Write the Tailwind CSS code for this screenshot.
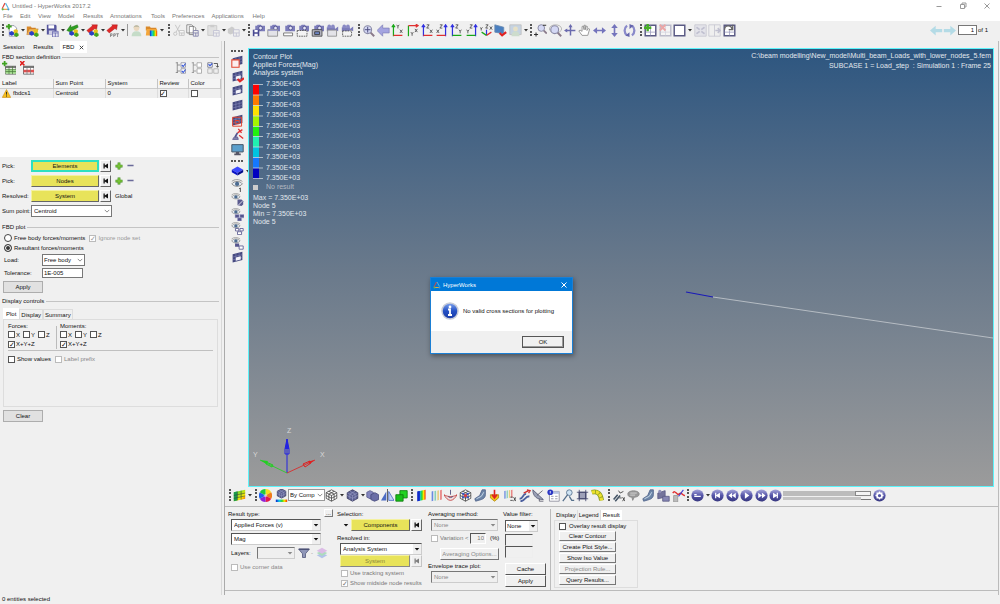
<!DOCTYPE html>
<html lang="en">
<head>
<meta charset="utf-8">
<title>Untitled - HyperWorks 2017.2</title>
<script src="https://cdn.jsdelivr.net/npm/@tailwindcss/browser@4"></script>
</head>
<body class="relative flex min-h-screen flex-col overflow-x-hidden bg-[#f0f0f0] font-['Liberation_Sans',Arial,sans-serif] text-[6px] leading-[8px] text-[#111] [&_[type=checkbox]]:flex [&_[type=checkbox]]:size-[7px] [&_[type=checkbox]]:shrink-0 [&_[type=checkbox]]:appearance-none [&_[type=checkbox]]:items-center [&_[type=checkbox]]:justify-center [&_[type=checkbox]]:border [&_[type=checkbox]]:border-[#555] [&_[type=checkbox]]:bg-white [&_[type=checkbox]:disabled]:border-[#bbb] [&_[type=checkbox]:checked]:before:text-[7px] [&_[type=checkbox]:checked]:before:leading-[7px] [&_[type=checkbox]:checked]:before:content-['✓'] [&_label]:whitespace-nowrap [&_button]:whitespace-nowrap">

<svg class="absolute size-0" aria-hidden="true">
  <defs>
    <linearGradient id="ball" x1="0" y1="0" x2="0" y2="1"><stop offset="0" stop-color="#a9a9dc"/><stop offset=".5" stop-color="#5555a8"/><stop offset="1" stop-color="#37377f"/></linearGradient>
    <linearGradient id="info" x1="0" y1="0" x2="0" y2="1"><stop offset="0" stop-color="#7fa4ee"/><stop offset=".5" stop-color="#2450c4"/><stop offset="1" stop-color="#1a3aa6"/></linearGradient>
    <linearGradient id="rain" x1="0" y1="0" x2="1" y2="0"><stop offset="0" stop-color="#0a1fd0"/><stop offset=".3" stop-color="#12c9e8"/><stop offset=".55" stop-color="#2ed52e"/><stop offset=".75" stop-color="#ffe500"/><stop offset="1" stop-color="#f03000"/></linearGradient>
    <linearGradient id="warm" x1="0" y1="0" x2="1" y2="1"><stop offset="0" stop-color="#1fb83a"/><stop offset=".4" stop-color="#9be020"/><stop offset=".7" stop-color="#ffe500"/><stop offset="1" stop-color="#f03000"/></linearGradient>
  </defs>
  <symbol id="trio" viewBox="0 0 16 16"><path d="M4 10l3-1.500L10 10v3l-3 1.500L4 13z" fill="#2a3fc4"/><path d="M9.500 7.500l2.500-1 2.500 1v3L12 12l-2.500-1z" fill="#e8c21c"/><path d="M10 12l2.500-1.500L15.500 12v2.500L13 16l-3-1.500z" fill="#43a51c"/></symbol>
  <symbol id="logo" viewBox="0 0 16 16"><path d="M7 2L2 12" stroke="#e0463a" stroke-width="2" fill="none"/><path d="M8 2l5 9" stroke="#58b4e0" stroke-width="2" fill="none"/><path d="M3 13h9" stroke="#e9a23a" stroke-width="2"/><circle cx="3" cy="13" r="2" fill="#5db65d"/><circle cx="13" cy="13" r="2" fill="#3b9ad6"/></symbol>
  <symbol id="new" viewBox="0 0 16 16"><path d="M4 2h6l3 3v10H4z" fill="#fff" stroke="#8a8aa0"/><path d="M0 3h7M3.500 0v6.500" stroke="#3fa321" stroke-width="2.400"/><use href="#trio"/></symbol>
  <symbol id="open" viewBox="0 0 16 16"><path d="M1 3h5l1 1.500h5V7H4l-3 6z" fill="#d9892b"/><path d="M4 6h11l-3 7H1z" fill="#f4b65a" stroke="#b9731f" stroke-width=".6"/><use href="#trio"/></symbol>
  <symbol id="save" viewBox="0 0 16 16"><path d="M1 1h11l1 1v11H1z" fill="#56569e"/><path d="M3 1.500h7v4H3z" fill="#fff"/><path d="M3.500 8h7v5h-7z" fill="#cfcfe6"/><path d="M8 9h7v7H8z" fill="#dfe0f0" stroke="#6a6ab0"/><path d="M8 11h7M11.500 11v5" stroke="#6a6ab0"/></symbol>
  <symbol id="imp" viewBox="0 0 16 16"><path d="M14 1L6 4V1L1 8l7 3-1-2.500L15 4z" fill="#2f9e22" stroke="#1c6e15" stroke-width=".5"/><use href="#trio"/></symbol>
  <symbol id="exp" viewBox="0 0 16 16"><path d="M1 8L8 2l-1-1h7l-1 6-2-1.500L4 11z" fill="#e02a2a" stroke="#9b1616" stroke-width=".5"/><use href="#trio"/></symbol>
  <symbol id="ppt" viewBox="0 0 16 16"><path d="M1 8L8 2l-1-1h7l-1 6-2-1.500L4 11z" fill="#e02a2a" stroke="#9b1616" stroke-width=".5"/><path d="M5.500 16v-4h2v2h-2M9.500 16v-4h2v2h-2M12.500 12H16M14.200 12v4" stroke="#666" stroke-width=".8" fill="none"/></symbol>
  <symbol id="user" viewBox="0 0 16 16"><g opacity=".6"><circle cx="8" cy="5" r="3.500" fill="#e7c9a0"/><path d="M4.500 5a3.500 3.500 0 017 0l-1-1.500h-5z" fill="#8b8b68"/><path d="M2 15c0-4 2-6 6-6s6 2 6 6z" fill="#a9cfae"/></g></symbol>
  <symbol id="opencol" viewBox="0 0 16 16"><path d="M1 3h5l1 1.500h7V8H1z" fill="#d9892b"/><path d="M2 6h13l-2 8H1z" fill="#f4a63a"/><path d="M6 8h9v7H6z" fill="url(#rain)"/></symbol>
  <symbol id="cut" viewBox="0 0 16 16"><g opacity=".4" stroke="#777" fill="none"><path d="M4 1l5 9M10 1L5 10"/><circle cx="4" cy="12" r="2"/><path d="M9 8h6v6H9zM9 11h6M12 11v3" fill="#fff"/></g></symbol>
  <symbol id="copy" viewBox="0 0 16 16"><path d="M1 1h6l2 2v8H1zM4 3h6l2 2v8H4z" fill="#fff" stroke="#777"/><path d="M9 8h6v7H9zM9 11h6M12 11v4" fill="#eee" stroke="#7d7da8"/></symbol>
  <symbol id="paste" viewBox="0 0 16 16"><g opacity=".4"><path d="M1 2h11v12H1z" fill="#ccc" stroke="#888"/><path d="M4 1h5v3H4z" fill="#999"/><path d="M8 8h7v7H8zM8 11h7M11.500 11v4" fill="#eee" stroke="#7d7da8"/></g></symbol>
  <symbol id="clone" viewBox="0 0 16 16"><g opacity=".4"><path d="M1 6l5-3 3 2v6l-5 2-3-2z" fill="#999"/><path d="M8 7h7v8H8zM8 11h7M11.500 11v4" fill="#eee" stroke="#7d7da8"/></g></symbol>
  <symbol id="cambody" viewBox="0 0 16 16"><path d="M4 2h2l1-1h4l1 1h4v7H4z" fill="#7c7cba"/><circle cx="10.500" cy="5" r="2.300" fill="#e6e6f6" stroke="#4a4a88"/></symbol>
  <symbol id="cam1" viewBox="0 0 16 16"><use href="#cambody"/><path d="M1 7h8v8H1z" fill="#4a4a92"/><path d="M3 7.500h4v2.500H3zM3 12h4v3H3z" fill="#fff"/></symbol>
  <symbol id="cam2" viewBox="0 0 16 16"><use href="#cambody"/><path d="M1 7h12v8H1z" fill="#e3e3e8" stroke="#888"/><path d="M1 7h12v1.500H1z" fill="#99c"/></symbol>
  <symbol id="cam3" viewBox="0 0 16 16"><use href="#cambody"/><path d="M2 11h11v3.500H2z" fill="#fff" stroke="#666"/></symbol>
  <symbol id="cam4" viewBox="0 0 16 16"><use href="#cambody"/><path d="M1.500 8h12v7h-12z" fill="#f4f4f4" stroke="#444" stroke-dasharray="2 1"/></symbol>
  <symbol id="cam5" viewBox="0 0 16 16"><use href="#cambody"/><path d="M1.500 7h12v8h-12z" fill="#b5b5c0" stroke="#444"/><path d="M4.500 9.500h6v3.500h-6z" fill="#6e86c4" stroke="#333"/></symbol>
  <symbol id="vid" viewBox="0 0 16 16"><path d="M1 4h10v5H1zM11 6l4-3v6l-4-2z" fill="#7c7cba"/><circle cx="4" cy="3" r="2.300" fill="#8a8ac4"/><circle cx="8.500" cy="3" r="2.300" fill="#8a8ac4"/></symbol>
  <symbol id="cam6" viewBox="0 0 16 16"><use href="#vid"/><path d="M2 7.500h11V15H2z" fill="#e3e3e8" stroke="#888"/></symbol>
  <symbol id="cam7" viewBox="0 0 16 16"><use href="#vid"/><path d="M2 8.500h11V15H2z" fill="#f4f4f4" stroke="#444" stroke-dasharray="2 1"/></symbol>
  <symbol id="lens" viewBox="0 0 16 16"><path d="M10 10l5 5" stroke="#8a7a8a" stroke-width="2.500"/><circle cx="7" cy="7" r="4.800" fill="#d4d8f4" stroke="#8b8ba6" stroke-width="1.400"/></symbol>
  <symbol id="fit" viewBox="0 0 16 16"><use href="#lens"/><path d="M3.500 7h7M7 3.500v7" stroke="#4c4c80" stroke-width="1.200"/></symbol>
  <symbol id="back" viewBox="0 0 16 16"><path d="M0 8l7-7v4h8v6H7v4z" fill="#a4a4e0" stroke="#7a7ab4" stroke-width=".8"/></symbol>
  <symbol id="ax1" viewBox="0 0 16 16"><path d="M3 15V2M1 4l2-3 2 3" stroke="#18a818" stroke-width="1.500" fill="none"/><path d="M3 14h11" stroke="#e03030" stroke-width="1.500"/><path d="M7 1l1.500 2L10 1M8.500 3v2.500M11 7l3 4M14 7l-3 4" stroke="#444" fill="none"/></symbol>
  <symbol id="ax2" viewBox="0 0 16 16"><path d="M3 15V2" stroke="#18a818" stroke-width="1.500"/><path d="M3 2h12M12 0l3 2-3 2" stroke="#e03030" stroke-width="1.500" fill="none"/><path d="M6 10l1.500 2L9 10M7.500 12v2.500M11 6l3 4M14 6l-3 4" stroke="#444" fill="none"/></symbol>
  <symbol id="ax3" viewBox="0 0 16 16"><path d="M3 15V2M1 4l2-3 2 3" stroke="#3030e0" stroke-width="1.500" fill="none"/><path d="M3 14h11" stroke="#e03030" stroke-width="1.500"/><path d="M7 1h3L7 5h3M11 7l3 4M14 7l-3 4" stroke="#444" fill="none"/></symbol>
  <symbol id="ax4" viewBox="0 0 16 16"><path d="M13 15V2M11 4l2-3 2 3" stroke="#3030e0" stroke-width="1.500" fill="none"/><path d="M13 14H2" stroke="#e03030" stroke-width="1.500"/><path d="M6 1h3L6 5h3M2 7l3 4M5 7l-3 4" stroke="#444" fill="none"/></symbol>
  <symbol id="ax5" viewBox="0 0 16 16"><path d="M3 15V2M1 4l2-3 2 3" stroke="#3030e0" stroke-width="1.500" fill="none"/><path d="M3 14h11" stroke="#18a818" stroke-width="1.500"/><path d="M7 1h3L7 5h3M11 7l1.500 2L14 7M12.500 9v2.500" stroke="#444" fill="none"/></symbol>
  <symbol id="ax6" viewBox="0 0 16 16"><path d="M13 15V2M11 4l2-3 2 3" stroke="#3030e0" stroke-width="1.500" fill="none"/><path d="M13 14H2" stroke="#18a818" stroke-width="1.500"/><path d="M6 1h3L6 5h3M2 7l1.500 2L5 7M3.500 9v2.500" stroke="#444" fill="none"/></symbol>
  <symbol id="ax7" viewBox="0 0 16 16"><path d="M8 14V7" stroke="#3030e0" stroke-width="1.500"/><path d="M8 14l6-4" stroke="#e03030" stroke-width="1.500"/><path d="M8 14l-6-4" stroke="#18a818" stroke-width="1.500"/><path d="M7 1h3L7 5h3M0 4l1.500 2L3 4M1.500 6v2M12 3l3 4M15 3l-3 4" stroke="#444" fill="none"/></symbol>
  <symbol id="flag" viewBox="0 0 16 16"><path d="M1 1l11 3v8L1 10z" fill="#4a7fc0" stroke="#6a8ab0"/><path d="M7 11l3 3 5-4" stroke="#e02020" stroke-width="2.600" fill="none"/></symbol>
  <symbol id="pic" viewBox="0 0 16 16"><g opacity=".4"><path d="M1 1h14v12H1z" fill="#8ac" stroke="#777"/><circle cx="8" cy="6" r="3" fill="#d9c98a"/><path d="M3 15c0-4 2-6 5-6s5 2 5 6z" fill="#9bc09b"/></g></symbol>
  <symbol id="zio" viewBox="0 0 16 16"><g transform="translate(3 -1) scale(.85)"><use href="#lens" width="16" height="16"/></g><path d="M0 13h5M2.500 10.500v5M11 1.500h4" stroke="#333" stroke-width="1.300"/></symbol>
  <symbol id="zwin" viewBox="0 0 16 16"><ellipse cx="8" cy="6" rx="7.500" ry="5" fill="none" stroke="#aaa"/><use href="#lens"/></symbol>
  <symbol id="cross" viewBox="0 0 16 16"><path d="M2 8h12M8 2v12" stroke="#6a6aae" stroke-width="1.800"/><path d="M0 8l4-2.500v5zM8 0l2.500 4h-5z" fill="#6a6aae"/></symbol>
  <symbol id="hand" viewBox="0 0 16 16"><path d="M5 14L1 8.500 2.500 7.500 5 9V3l1.500-.5L7.500 7V1.500H9V7l1-4.500 1.500.5L11 8l2-2.500 1.300.8L12 14z" fill="#fff" stroke="#888"/></symbol>
  <symbol id="lr" viewBox="0 0 16 16"><path d="M0 8l5-4v3h6V4l5 4-5 4V9H5v3z" fill="#7474bc"/></symbol>
  <symbol id="ud" viewBox="0 0 16 16"><path d="M8 0l4 5H9v6h3l-4 5-4-5h3V5H4z" fill="#7474bc"/></symbol>
  <symbol id="rot" viewBox="0 0 16 16"><path d="M5 2C1 5 1 11 5 14M11 14c4-3 4-9 0-12" stroke="#8a8aca" stroke-width="2.800" fill="none"/><path d="M3 14l5 2V10zM13 2L8 0v6z" fill="#6464ac"/></symbol>
  <symbol id="win" viewBox="0 0 16 16"><path d="M1.500 1.500h13v13h-13z" fill="#fff" stroke="#5a5a84" stroke-width="1.800"/></symbol>
  <symbol id="wadd" viewBox="0 0 16 16"><use href="#win"/><path d="M2 10h12M8 2v12" stroke="#a0a0c0"/><path d="M0 4.500h9M4.500 0v9" stroke="#46ae26" stroke-width="3"/></symbol>
  <symbol id="wdel" viewBox="0 0 16 16"><g opacity=".35"><use href="#win"/><path d="M2 10h12M8 2v12" stroke="#a0a0c0"/><path d="M1 1l7 7M8 1L1 8" stroke="#e02020" stroke-width="2.400"/></g></symbol>
  <symbol id="wexp" viewBox="0 0 16 16"><g opacity=".3"><path d="M1 1h14v14H1z" fill="#c8c8dc" stroke="#666688"/><path d="M3 4l4 3M13 4L9 7M3 12l4-3M13 12L9 9" stroke="#555588" stroke-width="2"/></g></symbol>
  <symbol id="wnext" viewBox="0 0 16 16"><g opacity=".3"><path d="M1 1h14v14H1zM8 1v14" fill="#eee" stroke="#666688"/><path d="M9 8h5M12 5l3 3-3 3" stroke="#555588" stroke-width="2" fill="none"/></g></symbol>
  <symbol id="wswap" viewBox="0 0 16 16"><use href="#win"/><path d="M2 10h12M8 8v6" stroke="#a0a0c0"/><path d="M2 7c0-6 8-6 9-1M12 1v6H7" stroke="#666" stroke-width="1.600" fill="none"/></symbol>
  <symbol id="pl" viewBox="0 0 16 16"><path d="M0 8l7-6v4h8v4H7v4z" fill="#b4dbe6"/></symbol>
  <symbol id="pr" viewBox="0 0 16 16"><path d="M16 8L9 2v4H1v4h8v4z" fill="#b4dbe6"/></symbol>
  <symbol id="mesh" viewBox="0 0 16 16"><path d="M2 4l12-3v10L2 14z" fill="#45497f"/><path d="M6 3v10M10 2v10M2 7.500l12-3M2 11l12-3" stroke="#8f93c4" stroke-width=".6"/></symbol>
  <symbol id="meshw" viewBox="0 0 16 16"><use href="#mesh"/><path d="M6 8l6-1.500v4L6 12z" fill="#f4f4fa"/></symbol>
  <symbol id="m1" viewBox="0 0 16 16"><use href="#mesh"/><path d="M1 6h9v9H1z" fill="#fbeeee" stroke="#e2442e" stroke-width="1.300"/></symbol>
  <symbol id="m2" viewBox="0 0 16 16"><use href="#meshw"/><path d="M8 11l3 3 5-4" stroke="#e02828" stroke-width="2.600" fill="none"/></symbol>
  <symbol id="m5" viewBox="0 0 16 16"><use href="#mesh"/><path d="M2 4h11v11H2zM5 8h5v4H5z" fill="none" stroke="#e2442e" stroke-width="1.200"/></symbol>
  <symbol id="m6" viewBox="0 0 16 16"><path d="M2 14l2-3 4 0 1 3z" fill="#8888b0" stroke="#55558e"/><path d="M5 11l3-5" stroke="#55558e" stroke-width="2.200"/><path d="M8 6l6-4M9 1l4 5M10 9l5 4" stroke="#e03030" stroke-width="1.600"/></symbol>
  <symbol id="mon" viewBox="0 0 16 16"><path d="M1 2h14v9H1z" fill="#5b9fcc" stroke="#456" stroke-width="1.200"/><path d="M6 11h4v2h2v2H4v-2h2z" fill="#556"/></symbol>
  <symbol id="bluec" viewBox="0 0 16 16"><path d="M1 7l7-4 7 4-7 4z" fill="#3a48ff"/><path d="M1 7l7 4v3L1 10z" fill="#0a14c8"/><path d="M15 7l-7 4v3l7-4z" fill="#050c8a"/></symbol>
  <symbol id="eye" viewBox="0 0 16 16"><path d="M1 6c3-4 10-4 13 0-3 4-10 4-13 0z" fill="#e8eef4" stroke="#777"/><circle cx="7.500" cy="6" r="2.600" fill="#4c6b90"/><path d="M1 3c3-3 9-3 13 0" stroke="#888" fill="none"/></symbol>
  <symbol id="eye1" viewBox="0 0 16 16"><use href="#eye"/><path d="M10 12l1.500-1v5" stroke="#333" fill="none"/></symbol>
  <symbol id="eye2" viewBox="0 0 16 16"><g transform="scale(.8)"><use href="#eye" width="16" height="16"/></g><path d="M8 8l5 0 2 2v4l-2 2-5-1z" fill="#5a5a8e"/><path d="M9 15l5-5" stroke="#fff"/></symbol>
  <symbol id="eye3" viewBox="0 0 16 16"><g transform="scale(.8)"><use href="#eye" width="16" height="16"/></g><path d="M5 8h5v4H5zM11 8h5v4h-5zM8 12h5v4H8z" fill="#55558e" stroke="#aaaad0" stroke-width=".6"/></symbol>
  <symbol id="eye4" viewBox="0 0 16 16"><g transform="scale(.8)"><use href="#eye" width="16" height="16"/></g><path d="M5.500 8h4v3h-4zM11 8h4v3h-4zM8 12h5v3.500H8z" fill="#fff" stroke="#55558e"/></symbol>
  <symbol id="eye5" viewBox="0 0 16 16"><g transform="scale(.8)"><use href="#eye" width="16" height="16"/></g><path d="M5 8h5v4H5z" fill="#55558e"/><path d="M10 11h5v4h-5z" fill="#fff" stroke="#55558e"/></symbol>
  <symbol id="cont" viewBox="0 0 16 16"><path d="M1 4l14-3v11L1 15z" fill="url(#warm)"/><path d="M1 4l4-1v11l-4 1z" fill="#1d9a4a"/><path d="M5.500 3v11M10 2v11M1 8l14-3M1 11.500l14-3" stroke="#234" stroke-width=".6"/></symbol>
  <symbol id="wheel" viewBox="0 0 16 16"><path d="M8 8V0a8 8 0 017 4z" fill="#f6e21c"/><path d="M8 8l7-4a8 8 0 010 8z" fill="#f07c1a"/><path d="M8 8l7 4a8 8 0 01-7 4z" fill="#e3174e"/><path d="M8 8v8a8 8 0 01-7-4z" fill="#8d23d8"/><path d="M8 8l-7 4a8 8 0 010-8z" fill="#1d62f0"/><path d="M8 8L1 4a8 8 0 017-4z" fill="#20c840"/><circle cx="8" cy="8" r="2" fill="#fff" opacity=".5"/></symbol>
  <symbol id="cube" viewBox="0 0 16 16"><path d="M8 1l6.500 3.500v7L8 15l-6.500-3.500v-7z" fill="#5a5e90" stroke="#36385c"/><path d="M1.500 4.500L8 8l6.500-3.500M8 8v7M4.700 2.800l6.500 3.500v6.800M11.300 2.800L4.800 6.300v6.800M1.500 8L8 11.500 14.500 8" stroke="#9fa3cc" stroke-width=".7" fill="none"/></symbol>
  <symbol id="cubepal" viewBox="0 0 16 16"><g transform="translate(1.500 -1) scale(.82)"><use href="#cube" width="16" height="16"/></g><path d="M1 13h14v3H1z" fill="url(#rain)"/></symbol>
  <symbol id="wcube" viewBox="0 0 16 16"><path d="M8 1l6.500 3.500v7L8 15l-6.500-3.500v-7zM1.500 4.500L8 8l6.500-3.500M8 8v7M4.700 2.800l6.500 3.500v6.800M11.300 2.800L4.800 6.300v6.800M1.500 8L8 11.500 14.500 8" fill="#fff" stroke="#444"/></symbol>
  <symbol id="cubes" viewBox="0 0 16 16"><path d="M1 4l4-2 4 2v6l-4 2-4-2z" fill="#8386be" stroke="#5c5f90"/><path d="M6 7l5-2.500L15.500 7v6l-5 2L6 13z" fill="#6a6ea6" stroke="#44477a"/></symbol>
  <symbol id="mir" viewBox="0 0 16 16"><path d="M8 0v16" stroke="#444"/><path d="M6.500 3v11H0z" fill="#4b6bc4"/><path d="M9.500 3v11H16z" fill="#c4d3f6" stroke="#4b6bc4"/></symbol>
  <symbol id="grn" viewBox="0 0 16 16"><path d="M6 2h9v9H6z" fill="#22d322" stroke="#0c7a0c"/><path d="M1 7h9v8H1z" fill="#18c018" stroke="#0c7a0c"/></symbol>
  <symbol id="c2" viewBox="0 0 16 16"><path d="M3 3l10-2v12L3 15z" fill="url(#rain)"/><path d="M3 3l3-.6v12L3 15z" fill="#1228c8"/></symbol>
  <symbol id="c3" viewBox="0 0 16 16"><path d="M2 3l2-.5v12L2 15z" fill="#6a8ae0"/><path d="M5.500 2.500l2-.5v12l-2 .5z" fill="#8ad0b8"/><path d="M9 2l2-.5v12l-2 .5z" fill="#e8cc80"/><path d="M12.500 1.500l2-.5v12l-2 .5z" fill="#e87a7a"/></symbol>
  <symbol id="c4" viewBox="0 0 16 16"><path d="M0 7c4 3 12 3 16 0-2 4-5 7-8 7S2 11 0 7z" fill="#f2dede" stroke="#c03a3a"/><path d="M8 1v6M5 9c1 2 5 2 6 0" stroke="#447" fill="none"/></symbol>
  <symbol id="c5" viewBox="0 0 16 16"><use href="#wcube"/><path d="M4 5l8 6M12 5l-8 6" stroke="#2d50d8" stroke-width="1.600"/><circle cx="8" cy="8" r="2" fill="#e04040"/></symbol>
  <symbol id="foot" viewBox="0 0 16 16"><path d="M10 1h4v6c0 3-2 5-5 6l-7 2-1-3 6-4z" fill="#6d86a8" stroke="#50628a"/><path d="M3 12l6-3 3-5" stroke="#d8e6f4" fill="none"/></symbol>
  <symbol id="c7" viewBox="0 0 16 16"><path d="M3 7h10v4l-5 4-5-4z" fill="#f2c31a" stroke="#b08a10"/><path d="M8 1v9M5 7l3 4 3-4" stroke="#e02020" stroke-width="2" fill="none"/></symbol>
  <symbol id="c8" viewBox="0 0 16 16"><g transform="scale(.8)"><use href="#c3" width="16" height="16"/></g><path d="M9 10h3M9 14h3M13 10l3 5M16 10l-3 5" stroke="#333"/></symbol>
  <symbol id="c9" viewBox="0 0 16 16"><path d="M2 12c5 0 3-6 8-6M3 15c6 0 5-6 11-6" stroke="#4b5f9e" stroke-width="2.400" fill="none"/><path d="M7 5l6-3M11 1l4 1-2 3" stroke="#d03030" stroke-width="1.600" fill="none"/></symbol>
  <symbol id="dish" viewBox="0 0 16 16"><path d="M1 1c0 8 5 12 13 12z" fill="#9aa0b6" stroke="#555a75"/><path d="M6 8l7-6M9 12v3h5" stroke="#556" fill="none"/></symbol>
  <symbol id="rep" viewBox="0 0 16 16"><path d="M3 3h12v12H3z" fill="#fff" stroke="#889"/><path d="M3 3h12v3H3z" fill="#b8c4e4"/><path d="M5 9h3M10 9h3M5 12h3M10 12h3" stroke="#889"/><circle cx="4" cy="4" r="3.500" fill="#2b36c4"/><path d="M4 2.500v3" stroke="#fff"/></symbol>
  <symbol id="zoomp" viewBox="0 0 16 16"><circle cx="9" cy="4.500" r="3.500" fill="#cfe4f4" stroke="#56708c"/><path d="M7 7l-6 8M9 9l3 5h3" stroke="#56708c" stroke-width="1.600" fill="none"/></symbol>
  <symbol id="tr" viewBox="0 0 16 16"><path d="M4 4h8v8H4z" fill="#9da0b8" stroke="#44476c" stroke-width="1.500"/><path d="M1 4h14M12 1v14M4 1v14M1 12h14" stroke="#44476c"/></symbol>
  <symbol id="pipe" viewBox="0 0 16 16"><path d="M1 4c7-2 11 2 12 10" stroke="#8b9d20" stroke-width="6" fill="none"/><path d="M1 4c7-2 11 2 12 10" stroke="#ece02c" stroke-width="4" fill="none" stroke-dasharray="4 1"/></symbol>
  <symbol id="d1" viewBox="0 0 16 16"><path d="M2 13l5-6M4 15l6-7" stroke="#456" stroke-width="2"/><path d="M8 2l2 3 4-2M9 11h3M13 10l3 5M16 10l-3 5" stroke="#333" fill="none"/></symbol>
  <symbol id="note" viewBox="0 0 16 16"><path d="M1 6c0-5 14-5 14 0 0 3-3 4-6 4l-2 4-1-4C3 10 1 9 1 6z" fill="#999" stroke="#888"/><path d="M4 5h8M4 7.500h6" stroke="#ddd"/></symbol>
  <symbol id="vcam" viewBox="0 0 16 16"><path d="M1 5l9-3v8l-9 2z" fill="#74749c" stroke="#5a5a84"/><path d="M7 9h8v6H7z" fill="#8787b4" stroke="#5a5a84"/><circle cx="3.500" cy="3" r="2" fill="#9090b8"/></symbol>
  <symbol id="plot" viewBox="0 0 16 16"><path d="M2 8h5v8H2z" fill="#bbb" stroke="#999"/><path d="M1 5c3-5 5 4 8 1s4 3 7 2" stroke="#e03030" stroke-width="1.800" fill="none"/><path d="M8 9l6-8" stroke="#4040d0" stroke-width="1.300"/></symbol>
  <symbol id="bl" viewBox="0 0 16 16"><circle cx="8" cy="8" r="7.500" fill="url(#ball)"/></symbol>
  <symbol id="b0" viewBox="0 0 16 16"><use href="#bl"/><path d="M4 9h8M4 7h3" stroke="#fff" stroke-width="1.500"/></symbol>
  <symbol id="b1" viewBox="0 0 16 16"><use href="#bl"/><path d="M5 4.500h1.500v3L11 4.500v7L6.500 8.500v3H5z" fill="#fff"/></symbol>
  <symbol id="b2" viewBox="0 0 16 16"><use href="#bl"/><path d="M3 8l4.500-3.500v7zM7.500 8L12 4.500v7z" fill="#fff"/></symbol>
  <symbol id="b3" viewBox="0 0 16 16"><use href="#bl"/><path d="M6 4l5.500 4L6 12z" fill="#fff"/></symbol>
  <symbol id="b4" viewBox="0 0 16 16"><use href="#bl"/><path d="M13 8L8.500 4.500v7zM8.500 8L4 4.500v7z" fill="#fff"/></symbol>
  <symbol id="b5" viewBox="0 0 16 16"><use href="#bl"/><path d="M11 4.500H9.500v3L5 4.500v7l4.500-3v3H11z" fill="#fff"/></symbol>
  <symbol id="gear" viewBox="0 0 16 16"><use href="#bl"/><circle cx="8" cy="8" r="3" fill="none" stroke="#fff" stroke-width="2"/><path d="M8 3v2M8 11v2M3 8h2M11 8h2M4.500 4.500l1.500 1.500M10 10l1.500 1.500M4.500 11.500L6 10M10 6l1.500-1.500" stroke="#fff" stroke-width="1.600"/></symbol>
  <symbol id="tadd" viewBox="0 0 16 16"><path d="M4 6h12v9H4z" fill="#fff" stroke="#666"/><path d="M4 7h12" stroke="#555" stroke-width="1.500"/><path d="M4 9.500h12v5H4z" fill="#9fd98a"/><path d="M8 6v9M12 6v9M4 12h12M4 9.500h12" stroke="#4a7a3c" stroke-width=".8"/><path d="M0 3h6M3 0v6" stroke="#3fa321" stroke-width="2"/></symbol>
  <symbol id="tdel" viewBox="0 0 16 16"><path d="M4 6h12v9H4z" fill="#fff" stroke="#666"/><path d="M4 7h12" stroke="#555" stroke-width="1.500"/><path d="M4 10h12v3H4z" fill="#e05050"/><path d="M8 6v9M12 6v9" stroke="#777" stroke-width=".8"/><path d="M0 0l5 5M5 0L0 5" stroke="#e02020" stroke-width="1.800"/></symbol>
  <symbol id="t1" viewBox="0 0 16 16"><path d="M3 1v13M3 4h4M3 12h4M1 1h3M1 14h3" stroke="#777" fill="none"/><path d="M8 1h6v6H8zM8 9h6v6H8z" fill="#fff" stroke="#889"/><path d="M9 4l2 2 3-4M9 12l2 2 3-4" stroke="#3557d8" stroke-width="1.500" fill="none"/></symbol>
  <symbol id="t2" viewBox="0 0 16 16"><path d="M3 1v13M3 4h4M3 12h4M1 1h3M1 14h3" stroke="#888" fill="none"/><path d="M8 1h6v6H8zM8 9h6v6H8z" fill="#fff" stroke="#999"/></symbol>
  <symbol id="t3" viewBox="0 0 16 16"><path d="M1 1h6v6H1z" fill="#fff" stroke="#667"/><path d="M9 9h6v6H9zM1 9h6v6H1z" fill="#eee" stroke="#aaa"/><path d="M2 3l2 2 3-3" stroke="#3557d8" stroke-width="1.500" fill="none"/><path d="M9 2h5v5M12 5l2 2 2-2" stroke="#333" fill="none"/></symbol>
  <symbol id="filter" viewBox="0 0 16 16"><path d="M1 3h14l-5 6v5H6V9z" fill="#8f96b8" stroke="#4c5276"/><path d="M1 3h14" stroke="#4c5276" stroke-width="2"/></symbol>
  <symbol id="layers" viewBox="0 0 16 16"><g opacity=".6"><path d="M1 11l7-3 7 3-7 4z" fill="#8aa6e6"/><path d="M1 8l7-3 7 3-7 4z" fill="#7fd09a"/><path d="M1 5l7-4 7 4-7 4z" fill="#d09ae0"/></g></symbol>
  <symbol id="first" viewBox="0 0 16 16"><path d="M3 3h2.500v4L12 3v10L5.500 9v4H3z" fill="#111"/></symbol>
  <symbol id="plus" viewBox="0 0 16 16"><path d="M1 8h14M8 1v14" stroke="#3f8a1a" stroke-width="5.500"/><path d="M2 8h12M8 2v12" stroke="#7cc63a" stroke-width="3"/></symbol>
  <symbol id="minus" viewBox="0 0 16 16"><path d="M1 8h14" stroke="#6a6a9a" stroke-width="3.500"/></symbol>
  <symbol id="chev" viewBox="0 0 16 16"><path d="M2 5l6 6 6-6" stroke="#555" stroke-width="1.800" fill="none"/></symbol>
  <symbol id="tri" viewBox="0 0 16 16"><path d="M2 5h12l-6 7z" fill="currentColor"/></symbol>
</svg>

<!-- Title bar and menus -->
<header class="bg-white text-[#777]">
  <div class="flex h-3 items-center pl-px">
    <svg class="size-[9px]"><use href="#logo"/></svg><h1 class="ml-0.5">Untitled - HyperWorks 2017.2</h1>
    <div class="ml-auto flex items-center gap-[14px] pr-2">
      <button aria-label="Minimize"><svg class="size-2.5" viewBox="0 0 10 10"><path d="M2.500 5.500h5" stroke="#999"/></svg></button>
      <button aria-label="Restore"><svg class="size-2.5" viewBox="0 0 10 10"><path d="M2.500 3.500h4v4h-4zM4 3V2h4v4H7" fill="none" stroke="#999"/></svg></button>
      <button aria-label="Close"><svg class="size-2.5" viewBox="0 0 10 10"><path d="M2.500 2.500l5 5M7.500 2.500l-5 5" stroke="#999"/></svg></button>
    </div>
  </div>
  <nav class="flex h-[9px] items-center gap-[7px] pl-[3px] leading-[9px]">
    <a href="#" class="min-w-2.5">File</a><a href="#" class="min-w-[11px]">Edit</a><a href="#" class="min-w-[13px]">View</a><a href="#" class="min-w-[18px]">Model</a><a href="#">Results</a><a href="#" class="min-w-[34px]">Annotations</a><a href="#">Tools</a><a href="#" class="min-w-8">Preferences</a><a href="#" class="min-w-[34px]">Applications</a><a href="#">Help</a>
  </nav>
</header>

<!-- Main toolbar -->
<div class="flex h-5 items-center pb-0.5" role="toolbar">
  <i class="ml-0.5 h-3 border-l-2 border-dotted border-[#555]"></i>
  <div class="ml-0.5 flex w-[119px] justify-between" data-icons="new+ open+ save+ imp+ exp+ ppt+"></div>
  <i class="ml-0.5 h-3 w-px bg-[#999]"></i>
  <div class="ml-0.5 flex w-[34px] justify-between" data-icons="user opencol+"></div>
  <i class="ml-1 h-3 border-l-2 border-dotted border-[#555]"></i>
  <div class="ml-0.5 flex w-[74px] justify-between" data-icons="cut copy+ paste+ clone+"></div>
  <i class="ml-0.5 h-3 border-l-2 border-dotted border-[#555]"></i>
  <div class="ml-0.5 flex w-[102px] justify-between" data-icons="cam1 cam2 cam3 cam4 cam5 cam6 cam7"></div>
  <i class="ml-1 h-3 border-l-2 border-dotted border-[#555]"></i>
  <div class="ml-0.5 flex w-[166px] justify-between" data-icons="fit back ax1 ax2 ax3 ax4 ax5 ax6 ax7 flag pic+"></div>
  <i class="ml-0.5 h-3 border-l-2 border-dotted border-[#555]"></i>
  <div class="ml-0.5 flex w-[102px] justify-between" data-icons="zio zwin cross hand lr ud rot"></div>
  <i class="ml-1 h-3 border-l-2 border-dotted border-[#555]"></i>
  <div class="ml-0.5 flex w-[92px] justify-between" data-icons="wadd wdel win+ wexp wnext wswap"></div>
  <div class="ml-auto flex items-center pr-3">
    <button aria-label="Previous page"><svg class="size-[13px]"><use href="#pl"/></svg></button>
    <button aria-label="Next page"><svg class="size-[13px]"><use href="#pr"/></svg></button>
    <input aria-label="Page" value="1" class="ml-0.5 h-2.5 w-[19px] border border-[#777] bg-white px-0.5 text-right"><span class="ml-px">of 1</span>
  </div>
</div>

<main class="flex flex-1">
  <!-- Free body diagram panel -->
  <aside class="w-[222px] shrink-0 border-r border-[#d8d8d8]">
    <div class="flex h-3 items-center pl-[3px]" role="tablist">
      <button role="tab">Session</button><button role="tab" class="ml-[9px]">Results</button>
      <button role="tab" aria-selected="true" class="ml-[7px] flex h-full items-center gap-1 bg-white px-0.5">FBD <svg class="size-[7px]" viewBox="0 0 8 8"><path d="M2 2l4 4M6 2L2 6" stroke="#333"/></svg></button>
    </div>
    <div class="flex items-center gap-0.5 pl-0.5"><h2>FBD section definition</h2><i class="mr-0.5 h-px flex-1 bg-[#c4c4c4]"></i></div>
    <div class="flex h-[18px] items-start gap-1 pl-0.5">
      <button aria-label="Add section"><svg class="size-3.5"><use href="#tadd"/></svg></button>
      <button aria-label="Delete section"><svg class="size-3.5"><use href="#tdel"/></svg></button>
      <div class="ml-auto flex gap-1 pt-px pr-0.5">
        <button aria-label="Check all"><svg class="size-3"><use href="#t1"/></svg></button>
        <button aria-label="Uncheck all"><svg class="size-3"><use href="#t2"/></svg></button>
        <button aria-label="Reverse"><svg class="size-3"><use href="#t3"/></svg></button>
      </div>
    </div>
    <div class="h-[78px] bg-white">
      <table class="w-full table-fixed border-collapse text-left">
        <thead><tr class="h-[9px] border-b border-[#ccc] bg-[#f4f4f4] [&>th]:border-r [&>th]:border-[#c4c4c4] [&>th]:p-0 [&>th]:pl-0.5 [&>th]:font-normal"><th class="w-[53px]">Label</th><th class="w-[52px]">Sum Point</th><th class="w-[52px]">System</th><th class="w-[31px]">Review</th><th>Color</th></tr></thead>
        <tbody><tr class="h-[9px] bg-[#efefef] [&>td]:border-r [&>td]:border-[#ddd] [&>td]:p-0 [&>td]:pl-0.5">
          <td><span class="flex items-center gap-0.5"><svg class="size-[9px]" viewBox="0 0 16 16"><path d="M8 1l7.500 14H.5z" fill="#f7c01c" stroke="#c8870c"/><path d="M8 5v5M8 11.500v2" stroke="#222" stroke-width="1.600"/></svg>fbdcs1</span></td><td>Centroid</td><td>0</td><td><input type="checkbox" checked aria-label="Review"></td><td><input type="checkbox" aria-label="Color"></td></tr></tbody>
      </table>
    </div>
    <div class="mt-px flex flex-col pl-0.5">
      <div class="flex h-[15px] items-center"><span class="w-[29px]">Pick:</span>
        <button class="h-3 w-[68px] border-2 border-[#2ee0c0] bg-[#e8e35a] leading-[8px]">Elements</button>
        <button aria-label="Reset elements" class="ml-px grid h-3 w-[11px] place-items-center border border-t-white border-r-[#666] border-b-[#666] border-l-white"><svg class="size-2"><use href="#first"/></svg></button>
        <button aria-label="Add" class="ml-1"><svg class="size-2"><use href="#plus"/></svg></button><button aria-label="Remove" class="ml-1"><svg class="size-[7px]"><use href="#minus"/></svg></button></div>
      <div class="flex h-[15px] items-center"><span class="w-[29px]">Pick:</span>
        <button class="h-3 w-[68px] border border-t-[#f4f1a0] border-r-[#666] border-b-[#666] border-l-[#f4f1a0] bg-[#e8e35a]">Nodes</button>
        <button aria-label="Reset nodes" class="ml-px grid h-3 w-[11px] place-items-center border border-t-white border-r-[#666] border-b-[#666] border-l-white"><svg class="size-2"><use href="#first"/></svg></button>
        <button aria-label="Add" class="ml-1"><svg class="size-2"><use href="#plus"/></svg></button><button aria-label="Remove" class="ml-1"><svg class="size-[7px]"><use href="#minus"/></svg></button></div>
      <div class="flex h-[15px] items-center"><span class="w-[29px]">Resolved:</span>
        <button class="h-3 w-[68px] border border-t-[#f4f1a0] border-r-[#666] border-b-[#666] border-l-[#f4f1a0] bg-[#e8e35a]">System</button>
        <button aria-label="Reset system" class="ml-px grid h-3 w-[11px] place-items-center border border-t-white border-r-[#666] border-b-[#666] border-l-white"><svg class="size-2"><use href="#first"/></svg></button><span class="ml-1">Global</span></div>
      <div class="flex h-[15px] items-center"><label for="sp" class="w-[29px]">Sum point:</label>
        <span class="relative"><select id="sp" class="block h-3 w-[81px] appearance-none border border-[#777] bg-white pl-0.5"><option>Centroid</option></select><svg class="pointer-events-none absolute top-[3px] right-0.5 size-1.5"><use href="#chev"/></svg></span></div>
    </div>
    <div class="mt-[5px] flex items-center gap-0.5 pl-0.5"><h2>FBD plot</h2><i class="mr-0.5 h-px flex-1 bg-[#c4c4c4]"></i></div>
    <div class="mt-0.5 flex h-2.5 items-center pl-1">
      <label class="flex items-center gap-0.5"><input type="radio" name="r" class="size-2 appearance-none rounded-full border border-[#444] bg-white">Free body forces/moments</label>
      <label class="ml-1 flex items-center gap-0.5 text-[#999]"><input type="checkbox" checked disabled>Ignore node set</label>
    </div>
    <label class="flex h-2.5 items-center gap-0.5 pl-1"><input type="radio" name="r" checked class="size-2 appearance-none rounded-full border border-[#444] bg-[#333] shadow-[inset_0_0_0_1px_white]">Resultant forces/moments</label>
    <div class="flex h-[13px] items-center pl-1"><label for="ld" class="w-[38px]">Load:</label><span class="relative"><select id="ld" class="block h-3 w-[43px] appearance-none border border-[#777] bg-white pl-px"><option>Free body</option></select><svg class="pointer-events-none absolute top-[3px] right-0.5 size-1.5"><use href="#chev"/></svg></span></div>
    <div class="flex h-[13px] items-center pl-1"><label for="tol" class="w-[38px]">Tolerance:</label><input id="tol" value="1E-005" class="h-2.5 w-[41px] border border-[#777] bg-white pl-px"></div>
    <button class="mt-0.5 ml-[3px] block h-3 w-10 border border-[#adadad] bg-[#e1e1e1]">Apply</button>
    <div class="mt-1 flex items-center gap-0.5 pl-0.5"><h2>Display controls</h2><i class="mr-0.5 h-px flex-1 bg-[#c4c4c4]"></i></div>
    <div class="mt-[3px] flex h-[11px] items-end pl-[3px]" role="tablist"><button role="tab" aria-selected="true" class="h-[11px] bg-white px-[3px]">Plot</button><button role="tab" class="h-2.5 border border-b-0 border-[#ddd] px-px">Display</button><button role="tab" class="h-2.5 border border-b-0 border-[#ddd] px-px">Summary</button></div>
    <section class="mr-[3px] ml-[3px] h-[88px] border border-[#ddd] px-1 pt-0.5">
      <div class="flex pb-px">
        <fieldset class="w-[49px] border-r border-[#bbb]"><legend>Forces:</legend>
          <div class="flex h-[9px] items-center gap-[3px]"><label class="flex items-center gap-px"><input type="checkbox">X</label><label class="flex items-center gap-px"><input type="checkbox">Y</label><label class="flex items-center gap-px"><input type="checkbox">Z</label></div>
          <label class="flex h-2.5 items-center gap-px"><input type="checkbox" checked>X+Y+Z</label></fieldset>
        <fieldset class="ml-[3px]"><legend>Moments:</legend>
          <div class="flex h-[9px] items-center gap-[3px]"><label class="flex items-center gap-px"><input type="checkbox">X</label><label class="flex items-center gap-px"><input type="checkbox">Y</label><label class="flex items-center gap-px"><input type="checkbox">Z</label></div>
          <label class="flex h-2.5 items-center gap-px"><input type="checkbox" checked>X+Y+Z</label></fieldset>
      </div>
      <hr class="border-[#c0c0c0]">
      <div class="mt-1 flex gap-1"><label class="flex items-center gap-0.5"><input type="checkbox">Show values</label><label class="flex items-center gap-0.5 text-[#888]"><input type="checkbox" disabled>Label prefix</label></div>
    </section>
    <button class="mt-[3px] ml-[3px] block h-3 w-10 border border-[#adadad] bg-[#e1e1e1]">Clear</button>
  </aside>

  <div class="ml-0.5 flex min-w-0 flex-1 flex-col border-l border-[#aaa]">
    <div class="flex flex-1">
      <!-- View toolbar -->
      <div class="flex w-[23px] shrink-0 flex-col items-start pt-[9px] pl-1.5" role="toolbar">
        <i class="w-3 border-t-2 border-dotted border-[#555]"></i>
        <div class="mt-[3px] flex h-[101px] flex-col justify-between" data-icons="m1 m2 meshw mesh m5 m6 mon"></div>
        <i class="mt-1 w-3 border-t-2 border-dotted border-[#555]"></i>
        <div class="mt-0.5 flex h-[100px] flex-col justify-between" data-icons="bluec+ eye1 eye2 eye3 eye4 eye5 meshw"></div>
      </div>
      <!-- Model window -->
      <section class="relative mt-[7px] mr-1 flex-1 border border-[#5cf4fb] bg-linear-to-b from-[#2d5680] via-[#69798b] to-[#9b9b9b] pt-1 pl-1 text-[7px] text-[#e2e8ee]">
        <p>Contour Plot</p><p>Applied Forces(Mag)</p><p>Analysis system</p>
        <div class="mt-[3px] flex items-center">
          <svg class="h-[95px] w-[10px]" viewBox="0 0 10 95" preserveAspectRatio="none">
            <path d="M0 0h6v11H0z" fill="#f00"/><path d="M0 11h6v10H0z" fill="#ff7a00"/><path d="M0 21h6v11H0z" fill="#ffe100"/><path d="M0 32h6v10H0z" fill="#a4f500"/><path d="M0 42h6v10H0z" fill="#22f010"/><path d="M0 52h6v11H0z" fill="#20f0b0"/><path d="M0 63h6v10H0z" fill="#00c4e0"/><path d="M0 73h6v11H0z" fill="#1478ff"/><path d="M0 84h6v11H0z" fill="#0000c0"/>
            <path d="M0 .5h10M0 11h10M0 21.500h10M0 32h10M0 42.500h10M0 52.500h10M0 63h10M0 73.500h10M0 84h10M0 94.500h10" stroke="#cdd5dc" stroke-width=".8"/></svg>
          <div class="ml-[3px] flex h-[102px] flex-col justify-between"><span>7.350E+03</span><span>7.350E+03</span><span>7.350E+03</span><span>7.350E+03</span><span>7.350E+03</span><span>7.350E+03</span><span>7.350E+03</span><span>7.350E+03</span><span>7.350E+03</span><span>7.350E+03</span></div>
        </div>
        <p class="mt-px flex items-center gap-2 text-[#b4bac2]"><i class="size-[5px] bg-[#ccc]"></i>No result</p>
        <p class="mt-[3px]">Max = 7.350E+03</p><p>Node 5</p><p>Min = 7.350E+03</p><p>Node 5</p>
        <div class="absolute top-0.5 right-0.5 text-right leading-[10px] whitespace-pre"><p>C:\beam modelling\New_model\Multi_beam_Loads_with_lower_nodes_5.fem</p><p>SUBCASE 1 = Load_step  : Simulation 1 : Frame 25</p></div>
        <svg class="absolute top-[239px] right-0 h-[55px] w-[310px]" viewBox="0 0 310 55"><path d="M3 4l27 5" stroke="#1a1ab8" stroke-width="1.200"/><path d="M30 9l280 41" stroke="#c6cbd0" stroke-width=".8"/></svg>
        <svg class="absolute bottom-2 left-0.5 h-[54px] w-20" viewBox="0 0 80 54" font-size="7" fill="#d8d8d8">
          <path d="M36 49V15" stroke="#2222e0"/><path d="M36 15l-2 10v5h4v-5z" fill="none" stroke="#2222e0"/><path d="M34 25l2-10 2 10z" fill="#2222e0"/>
          <path d="M36 49l28-13" stroke="#e02020" stroke-width=".8"/><path d="M64 36l-7 1.500 1.500 2.500z" fill="#e02020"/><path d="M52 40l7-3 1 2-6 4z" fill="none" stroke="#e02020"/>
          <path d="M36 49L9 36" stroke="#20d020" stroke-width=".8"/><path d="M9 36l8 1-1.500 3z" fill="#20d020"/><path d="M15 40l6 3 1-2-7-3z" fill="none" stroke="#20d020"/>
          <text x="36" y="9">Z</text><text x="2" y="33">Y</text><text x="69" y="33">X</text></svg>
      </section>
    </div>

    <!-- Results toolbar -->
    <div class="flex h-[19px] items-center pb-[3px] pl-1" role="toolbar">
      <i class="h-3 border-l-2 border-dotted border-[#555]"></i>
      <div class="ml-0.5 flex w-5" data-icons="cont+"></div>
      <i class="ml-0.5 h-3 border-l-2 border-dotted border-[#555]"></i>
      <div class="ml-0.5 flex w-[29px] justify-between" data-icons="wheel cubepal"></div>
      <span class="relative"><select aria-label="Colour mode" class="block h-3 w-[37px] appearance-none border border-[#999] bg-white pl-px"><option>By Comp</option></select><svg class="pointer-events-none absolute top-[3px] right-0.5 size-1.5"><use href="#chev"/></svg></span>
      <div class="flex w-[83px] justify-between" data-icons="wcube+ cube+ cubes mir grn"></div>
      <i class="ml-[3px] h-3 border-l-2 border-dotted border-[#555]"></i>
      <div class="ml-0.5 flex w-[189px] justify-between" data-icons="c2 c3 c4 c5 foot c7 c8 c9 dish rep zoomp tr pipe"></div>
      <i class="ml-1 h-3 border-l-2 border-dotted border-[#555]"></i>
      <div class="ml-0.5 flex w-[73px] justify-between" data-icons="d1 note foot vcam plot"></div>
      <i class="ml-0.5 h-3 border-l-2 border-dotted border-[#555]"></i>
      <div class="ml-0.5 flex w-[91px] justify-between" data-icons="b0+ b1 b2 b3 b4 b5"></div>
      <div class="ml-px flex w-[88px] flex-col items-end gap-px">
        <input type="range" aria-label="Frame" value="100" class="block h-[5px] w-full appearance-none bg-[#bcbcbc] [&::-webkit-slider-thumb]:h-[5px] [&::-webkit-slider-thumb]:w-4 [&::-webkit-slider-thumb]:appearance-none [&::-webkit-slider-thumb]:border [&::-webkit-slider-thumb]:border-[#888] [&::-webkit-slider-thumb]:bg-[#f4f4f4]">
        <input type="range" aria-label="Speed" value="100" class="block h-[3px] w-full appearance-none bg-[#c4c4c4] [&::-webkit-slider-thumb]:h-[3px] [&::-webkit-slider-thumb]:w-2.5 [&::-webkit-slider-thumb]:appearance-none [&::-webkit-slider-thumb]:border-b [&::-webkit-slider-thumb]:border-[#777] [&::-webkit-slider-thumb]:bg-[#f4f4f4]">
      </div>
      <div class="ml-0.5 flex" data-icons="gear"></div>
    </div>

    <!-- Contour panel -->
    <section class="flex h-[85px] gap-2 border-y border-[#bbb] pt-0.5 pl-[3px]">
      <div class="w-[105px]">
        <div class="flex justify-between"><label for="rt" class="pt-px">Result type:</label><button class="h-2 w-[9px] border border-t-white border-r-[#777] border-b-[#777] border-l-white leading-[4px]">...</button></div>
        <div class="relative mt-px ml-[3px] w-[90px]"><select id="rt" class="block h-3 w-full appearance-none border border-t-[#555] border-r-[#ccc] border-b-[#ccc] border-l-[#555] bg-white pl-0.5"><option>Applied Forces (v)</option></select><svg class="pointer-events-none absolute top-px right-px h-2.5 w-2 bg-[#efefef] px-px"><use href="#tri"/></svg></div>
        <div class="relative mt-0.5 ml-[3px] w-[90px]"><select aria-label="Component" class="block h-3 w-full appearance-none border border-t-[#555] border-r-[#ccc] border-b-[#ccc] border-l-[#555] bg-white pl-0.5"><option>Mag</option></select><svg class="pointer-events-none absolute top-px right-px h-2.5 w-2 bg-[#efefef] px-px"><use href="#tri"/></svg></div>
        <div class="mt-0.5 flex h-3 items-center pl-[3px]"><label for="ly" class="w-[26px]">Layers:</label><span class="relative"><select id="ly" disabled class="block h-3 w-[38px] appearance-none border border-t-[#777] border-r-[#ccc] border-b-[#ccc] border-l-[#777] bg-[#efefef]"><option></option></select><svg class="pointer-events-none absolute top-[3px] right-0.5 size-1.5 text-[#888]"><use href="#tri"/></svg></span>
          <button aria-label="Filter" class="ml-[3px]"><svg class="size-3"><use href="#filter"/></svg></button><span class="mx-px text-[#999]">-</span><button aria-label="Layers" class="ml-0.5"><svg class="size-3"><use href="#layers"/></svg></button></div>
        <label class="mt-1 flex items-center gap-0.5 pl-[3px] text-[#888]"><input type="checkbox" disabled>Use corner data</label>
      </div>
      <div class="-ml-1 w-[85px]">
        <p class="pt-px">Selection:</p>
        <div class="mt-px ml-[3px] flex"><button aria-label="Selection mode" class="grid h-3 w-[11px] place-items-center"><svg class="size-1.5"><use href="#tri"/></svg></button><button class="h-3 flex-1 border border-t-[#f4f1a0] border-r-[#666] border-b-[#666] border-l-[#f4f1a0] bg-[#e8e35a]">Components</button><button aria-label="Reset components" class="ml-px grid h-3 w-[11px] place-items-center border border-t-white border-r-[#666] border-b-[#666] border-l-white"><svg class="size-2"><use href="#first"/></svg></button></div>
        <label for="ri" class="mt-[3px] block">Resolved in:</label>
        <div class="relative mt-px ml-[3px]"><select id="ri" class="block h-3 w-full appearance-none border border-t-[#555] border-r-[#ccc] border-b-[#ccc] border-l-[#555] bg-white pl-0.5"><option>Analysis System</option></select><svg class="pointer-events-none absolute top-px right-px h-2.5 w-2 bg-[#efefef] px-px"><use href="#tri"/></svg></div>
        <div class="ml-[3px] flex"><button disabled class="h-3 flex-1 border border-t-[#f4f1a0] border-r-[#888] border-b-[#888] border-l-[#f4f1a0] bg-[#e8e35a] text-[#8a873c]">System</button><button disabled aria-label="Reset system" class="ml-px grid h-3 w-[11px] place-items-center border border-t-white border-r-[#999] border-b-[#999] border-l-white opacity-50"><svg class="size-2"><use href="#first"/></svg></button></div>
        <label class="mt-px ml-1 flex h-2.5 items-center gap-0.5 text-[#777]"><input type="checkbox" disabled>Use tracking system</label>
        <label class="ml-1 flex h-2.5 items-center gap-0.5 text-[#777]"><input type="checkbox" checked disabled>Show midside node results</label>
      </div>
      <div class="-ml-0.5 w-[72px]">
        <label for="am" class="block pt-px">Averaging method:</label>
        <div class="relative mt-px ml-[3px] w-[67px]"><select id="am" disabled class="block h-3 w-full appearance-none border border-t-[#777] border-r-[#ccc] border-b-[#ccc] border-l-[#777] bg-[#efefef] pl-0.5 text-[#888]"><option>None</option></select><svg class="pointer-events-none absolute top-[3px] right-0.5 size-1.5 text-[#888]"><use href="#tri"/></svg></div>
        <div class="mt-px flex h-3 items-center pl-[3px] text-[#777]"><label class="flex w-9 items-center gap-0.5"><input type="checkbox" disabled>Variation &lt;</label><input aria-label="Variation" disabled value="10" class="ml-[3px] h-[11px] w-4 border border-t-[#555] border-r-white border-b-white border-l-[#555] px-px text-right"><span class="ml-1 text-[#111]">(%)</span></div>
        <button disabled class="mt-1 ml-3 block h-3 w-[59px] border border-t-white border-r-[#777] border-b-[#777] border-l-white text-[#888]">Averaging Options...</button>
        <label for="et" class="mt-0.5 block">Envelope trace plot:</label>
        <div class="relative mt-px ml-[3px] w-[67px]"><select id="et" disabled class="block h-3 w-full appearance-none border border-t-[#777] border-r-[#ccc] border-b-[#ccc] border-l-[#777] bg-[#efefef] pl-0.5 text-[#888]"><option>None</option></select><svg class="pointer-events-none absolute top-[3px] right-0.5 size-1.5 text-[#888]"><use href="#tri"/></svg></div>
      </div>
      <div class="-ml-[5px] w-[43px]">
        <label for="vf" class="block pt-px">Value filter:</label>
        <div class="relative mt-0.5 ml-0.5 w-[33px]"><select id="vf" class="block h-3 w-full appearance-none border border-t-[#555] border-r-[#ccc] border-b-[#ccc] border-l-[#555] bg-white pl-px"><option>None</option></select><svg class="pointer-events-none absolute top-px right-px h-2.5 w-2 bg-[#efefef] px-px"><use href="#tri"/></svg></div>
        <input aria-label="Minimum" disabled class="mt-0.5 ml-0.5 block h-3 w-7 border border-t-[#555] border-r-[#eee] border-b-[#eee] border-l-[#555]">
        <input aria-label="Maximum" disabled class="ml-0.5 block h-3 w-7 border border-t-[#555] border-r-[#eee] border-b-[#eee] border-l-[#555]">
        <button class="mt-[5px] ml-0.5 block h-3 w-[41px] border border-t-white border-r-[#555] border-b-[#555] border-l-white">Cache</button>
        <button class="ml-0.5 block h-3 w-[41px] border border-t-white border-r-[#555] border-b-[#555] border-l-white">Apply</button>
      </div>
      <div class="-ml-1 border-l border-[#bbb] pt-px pl-[3px]">
        <div class="flex h-2.5 items-end pl-px" role="tablist"><button role="tab" class="h-2.5 px-px">Display</button><button role="tab" class="h-2.5 border-x border-[#ddd] px-px">Legend</button><button role="tab" aria-selected="true" class="h-2.5 bg-white px-0.5">Result</button></div>
        <div class="flex w-[84px] flex-col gap-px border border-[#ddd] pt-px pb-0.5 pl-1">
          <label class="flex items-center gap-[3px]"><input type="checkbox">Overlay result display</label>
          <button class="h-2.5 w-[57px] border border-t-white border-r-[#777] border-b-[#777] border-l-white">Clear Contour</button>
          <button class="h-2.5 w-[57px] border border-t-white border-r-[#777] border-b-[#777] border-l-white">Create Plot Style...</button>
          <button class="h-2.5 w-[57px] border border-t-white border-r-[#777] border-b-[#777] border-l-white">Show Iso Value</button>
          <button disabled class="h-2.5 w-[57px] border border-t-white border-r-[#777] border-b-[#777] border-l-white text-[#888]">Projection Rule...</button>
          <button class="h-2.5 w-[57px] border border-t-white border-r-[#777] border-b-[#777] border-l-white">Query Results...</button>
        </div>
      </div>
    </section>
    <div class="h-1"></div>
  </div>
  <i class="mr-px w-px bg-[#bbb]"></i>
</main>

<footer class="h-[9px] pl-0.5">0 entities selected</footer>

<!-- Message box -->
<div role="dialog" aria-labelledby="dt" class="absolute top-[277px] left-[430px] flex h-[77px] w-[143px] flex-col border border-[#1b7fd4] bg-white shadow-[1px_2px_5px_rgba(0,0,0,0.4)]">
  <div class="flex h-[13px] items-center bg-[#0078d7] pr-1 pl-0.5 text-white"><svg class="size-2"><use href="#logo"/></svg><h2 id="dt" class="ml-0.5">HyperWorks</h2><button aria-label="Close" class="ml-auto"><svg class="size-2" viewBox="0 0 8 8"><path d="M1.500 1.500l5 5M6.500 1.500l-5 5" stroke="#fff"/></svg></button></div>
  <div class="flex flex-1 items-center gap-1 pl-2.5"><svg class="size-[18px]" viewBox="0 0 18 18"><circle cx="9" cy="9" r="8" fill="url(#info)" stroke="#c8ccd8" stroke-width="1.500"/><circle cx="9" cy="5" r="1.400" fill="#fff"/><path d="M7 7.500h2V13M7 13h4" stroke="#fff" stroke-width="1.800" fill="none"/></svg><p>No valid cross sections for plotting</p></div>
  <div class="flex h-[22px] items-center justify-end bg-[#f0f0f0] pr-2"><button class="h-3 w-[42px] border border-[#555] shadow-[inset_-1px_-1px_0_#999]">OK</button></div>
</div>

<script>
// Fill each toolbar from its list of symbol ids; a trailing "+" adds a drop-down arrow.
document.querySelectorAll('[data-icons]').forEach(bar => {
  bar.innerHTML = bar.dataset.icons.split(' ').map(item => {
    const drop = item.endsWith('+');
    const id = item.replace('+', '');
    return '<button aria-label="' + id + '" class="flex shrink-0 items-center"><svg class="size-[13px]"><use href="#' + id + '"/></svg>' +
      (drop ? '<svg class="ml-0.5 h-1 w-1 shrink-0" viewBox="0 0 4 4"><path d="M0 1h4L2 3.500z" fill="#333"/></svg>' : '') + '</button>';
  }).join('');
});
</script>
</body>
</html>
